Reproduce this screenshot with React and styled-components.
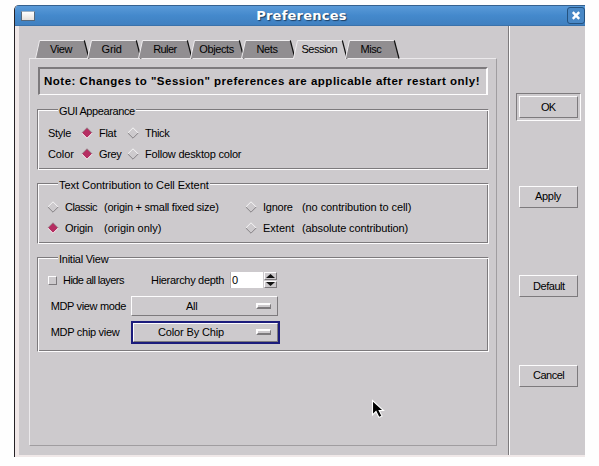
import React from "react";
import styled, { createGlobalStyle, css } from "styled-components";

const C = { bg: "#cdcacd", dark: "#7d7a7d", light: "#fdfcfd" };

const GlobalStyle = createGlobalStyle`
  body { margin: 0; background: #fefefe; overflow: hidden; }
  * { box-sizing: border-box; }
`;

const Stage = styled.div`
  position: relative;
  width: 599px;
  height: 466px;
  padding: 5px 0 0 14px;
  background: #fefefe;
  font: 11px/14px "Liberation Sans", Arial, sans-serif;
  color: #000;
`;

const Window = styled.div`
  display: flex;
  flex-direction: column;
  width: 571px;
  height: 452px;
  border-left: 1px solid #262226;
  border-top-left-radius: 5px;
  background: #f0e8e8;
  overflow: hidden;
`;

const TitleBar = styled.header`
  display: flex;
  align-items: center;
  justify-content: space-between;
  flex: none;
  height: 21px;
  padding: 0 0 0 6px;
  border-top: 1px solid #35618f;
  border-bottom: 1px solid #3a72ab;
  background: linear-gradient(#5a9ad8, #4489cc 50%, #4080c0);
`;

const MenuBox = styled.div`
  width: 14px;
  height: 10px;
  border: 1px solid #56697c;
  border-top-color: #9fb2c4;
  background: linear-gradient(#fff, #e4e0dc);
`;

const Title = styled.h1`
  margin: 0 0 0 1px;
  font: bold 13px/19px "DejaVu Sans", sans-serif;
  letter-spacing: 0.25px;
  color: #fff;
  text-shadow: 1px 1px 1px #1d3d60;
`;

const CloseButton = styled.button`
  display: flex;
  align-items: center;
  justify-content: center;
  width: 18px;
  height: 17px;
  padding: 0;
  border: 1px solid #24527f;
  border-radius: 3px;
  background: #4988c6;
`;

const Body = styled.div`
  display: flex;
  flex: 1;
  margin: 0 0 2px 4px;
  background: ${C.bg};
`;

const Main = styled.main`
  flex: none;
  width: 491px;
  padding: 14px 0 0 10px;
  border-right: 1px solid ${C.light};
  box-shadow: inset -1px 0 ${C.dark};
`;

const Side = styled.aside`
  display: flex;
  flex-direction: column;
  padding: 67px 0 0 6px;
`;

const Text = styled.span`
  white-space: pre;
  letter-spacing: ${(p) => p.$ls || 0}px;
  ${(p) => p.$w && css`flex: none; width: ${p.$w}px;`}
`;

const TabList = styled.nav`
  position: relative;
  z-index: 1;
  display: flex;
  height: 18px;
  padding-left: 6px;
`;

const TabItem = styled.div`
  position: relative;
  flex: none;
  width: 51.6px;
  height: 18px;
  padding: 2px 0 0 ${(p) => p.$pad}px;
`;

const TabShape = styled.svg`
  position: absolute;
  left: 0;
  top: 0;
  overflow: visible;
`;

const TabText = styled(Text)`
  position: relative;
`;

const Panel = styled.section`
  width: 468px;
  height: 388px;
  padding: 8px 0 0 7px;
  border: 1px solid #a09da0;
  border-top-color: #ebe9eb;
  border-left-color: #ebe9eb;
`;

const Note = styled.div`
  display: flex;
  width: 450px;
  height: 28px;
  margin-left: 1px;
  padding: 5px 0 0 4px;
  border: 2px solid ${C.light};
  border-bottom-width: 1px;
  border-top-color: ${C.dark};
  border-left-color: ${C.dark};
  font-weight: bold;
  font-size: 11.5px;
`;

const GroupBox = styled.section`
  position: relative;
  width: 452px;
  height: ${(p) => p.$h}px;
  margin-top: ${(p) => p.$mt}px;
  padding: ${(p) => p.$pt}px 0 0 ${(p) => p.$pl || 10}px;
  border: 1px solid;
  border-color: ${C.dark} ${C.light} ${C.light} ${C.dark};
  box-shadow: inset 1px 1px ${C.light}, inset -1px -1px ${C.dark};
`;

const Legend = styled(Text)`
  position: absolute;
  left: 20px;
  top: -6px;
  padding: 0 1px;
  background: ${C.bg};
`;

const Row = styled.div`
  display: flex;
  align-items: center;
  height: ${(p) => p.$h || 20.5}px;
`;

const Field = styled.div`
  display: flex;
  align-items: center;
  flex: none;
  width: ${(p) => p.$w}px;
`;

const DiamondIcon = styled.svg`
  flex: none;
  margin-right: 6px;
`;

const CheckBox = styled.span`
  width: 9px;
  height: 9px;
  margin-right: 6px;
  border: 1px solid;
  border-color: ${C.light} ${C.dark} ${C.dark} ${C.light};
`;

const DepthInput = styled.div`
  width: 33px;
  height: 16px;
  padding: 1px 0 0 1px;
  border-left: 1px solid #b5b2b5;
  background: #fff;
`;

const Spinner = styled.div`
  display: flex;
  flex-direction: column;
  gap: 1px;
  margin-left: 1px;
`;

const raised = css`
  border: 1px solid;
  border-color: ${C.light} ${C.dark} ${C.dark} ${C.light};
`;

const SpinButton = styled.div`
  display: flex;
  align-items: center;
  justify-content: center;
  width: 13px;
  height: 7.5px;
  ${raised}
`;

const OptionMenu = styled.div`
  display: flex;
  align-items: center;
  justify-content: space-between;
  width: 147px;
  height: 20px;
  padding: 0 6px 0 ${(p) => p.$pad}px;
  ${raised}
  ${(p) => p.$focus && css`outline: 2px solid #1c1c7c; outline-offset: 0; width: 145px; height: 19px; margin-left: 2px;`}
`;

const Indicator = styled.span`
  width: 15px;
  height: 6px;
  ${raised}
  border-width: 2px 1px 2px 2px;
`;

const ButtonSlot = styled.div`
  display: flex;
  width: 65px;
  height: 28px;
  margin-bottom: 61.5px;
  padding: 2px;
  border: 1px solid transparent;
  ${(p) => p.$default && css`border-color: ${C.dark} ${C.light} ${C.light} ${C.dark};`}
`;

const PushButton = styled.button`
  display: flex;
  align-items: center;
  width: 59px;
  height: 22px;
  padding: 0 0 1px ${(p) => p.$pad}px;
  ${raised}
  background: ${C.bg};
  font: inherit;
  color: inherit;
`;

const Pointer = styled.svg`
  position: absolute;
  left: 371px;
  top: 399px;
`;

const TABS = [
  { name: "View", pad: 15, ls: -0.4 },
  { name: "Grid", pad: 15, ls: -0.2 },
  { name: "Ruler", pad: 15, ls: -0.6 },
  { name: "Objects", pad: 9.5, ls: -0.4 },
  { name: "Nets", pad: 15, ls: -0.3 },
  { name: "Session", pad: 8.5, ls: -0.5, active: true },
  { name: "Misc", pad: 16, ls: -0.5 },
];

function Tab({ name, pad, ls, active }) {
  return (
    <TabItem $pad={pad}>
      <TabShape width="56" height="19">
        <path d="M0.5 18 L4.5 0.5 H49.5 L54 18 Z" fill={active ? C.bg : "#918e91"} />
        {active && <path d="M1 18.5 H52.5" stroke={C.bg} />}
        <path d="M0.5 18.5 L4.5 0.5 H49" fill="none" stroke="#efedef" />
        <path d="M49.3 0.5 L54 18.5" stroke="#111" strokeWidth="1.2" />
      </TabShape>
      <TabText $ls={ls}>{name}</TabText>
    </TabItem>
  );
}

function Diamond({ on }) {
  return (
    <DiamondIcon width="12" height="12" viewBox="0 0 12 12">
      <path d="M6 1 L11 6 L6 11 L1 6 Z" fill={on ? "#b52e62" : "none"} />
      <path d="M0.8 6 L6 0.8 L11.2 6" fill="none" stroke={on ? "#95707e" : "#f6f4f6"} />
      <path d="M0.8 6 L6 11.2 L11.2 6" fill="none" stroke={on ? "#f6e6ec" : "#858285"} />
    </DiamondIcon>
  );
}

function Radio({ on, w, children, ls }) {
  return (
    <Field $w={w}>
      <Diamond on={on} />
      <Text $ls={ls}>{children}</Text>
    </Field>
  );
}

function Group({ title, ls, h, mt, pt, pl, children }) {
  return (
    <GroupBox $h={h} $mt={mt} $pt={pt} $pl={pl}>
      <Legend $ls={ls}>{title}</Legend>
      {children}
    </GroupBox>
  );
}

function Action({ label, pad, ls, primary }) {
  return (
    <ButtonSlot $default={primary}>
      <PushButton $pad={pad}><Text $ls={ls}>{label}</Text></PushButton>
    </ButtonSlot>
  );
}

export default function App() {
  return (
    <Stage>
      <GlobalStyle />
      <Window>
        <TitleBar>
          <MenuBox />
          <Title>Preferences</Title>
          <CloseButton aria-label="Close">
            <svg width="10" height="9" viewBox="0 0 10 9">
              <path d="M1.8 1.2 L8.2 7.8 M8.2 1.2 L1.8 7.8" stroke="#fff" strokeWidth="2.4" />
            </svg>
          </CloseButton>
        </TitleBar>
        <Body>
          <Main>
            <TabList>
              {TABS.map((t) => <Tab key={t.name} {...t} />)}
            </TabList>
            <Panel>
              <Note>
                <Text $ls={0.5}>{'Note: Changes to "Session" preferences are applicable after restart only!'}</Text>
              </Note>
              <Group title="GUI Appearance" ls={-0.4} h={61} mt={14} pt={13}>
                <Row>
                  <Text $w={33} $ls={-0.3}>Style</Text>
                  <Radio on w={46} ls={-0.3}>Flat</Radio>
                  <Radio w={60} ls={-0.4}>Thick</Radio>
                </Row>
                <Row>
                  <Text $w={33} $ls={-0.1}>Color</Text>
                  <Radio on w={46} ls={-0.4}>Grey</Radio>
                  <Radio w={140} ls={-0.2}>Follow desktop color</Radio>
                </Row>
              </Group>
              <Group title="Text Contribution to Cell Extent" ls={-0.04} h={61} mt={13} pt={13} pl={9}>
                <Row>
                  <Radio w={57} ls={-0.5}>Classic</Radio>
                  <Text $w={141} $ls={-0.25}>(origin + small fixed size)</Text>
                  <Radio w={57} ls={-0.25}>Ignore</Radio>
                  <Text $ls={-0.08}>(no contribution to cell)</Text>
                </Row>
                <Row>
                  <Radio on w={57} ls={-0.25}>Origin</Radio>
                  <Text $w={141}>(origin only)</Text>
                  <Radio w={57}>Extent</Radio>
                  <Text $ls={-0.12}>(absolute contribution)</Text>
                </Row>
              </Group>
              <Group title="Initial View" ls={-0.25} h={95} mt={13} pt={11}>
                <Row $h={22}>
                  <CheckBox />
                  <Text $w={88} $ls={-0.55}>Hide all layers</Text>
                  <Text $w={79} $ls={-0.3}>Hierarchy depth</Text>
                  <DepthInput>0</DepthInput>
                  <Spinner>
                    <SpinButton>
                      <svg width="9" height="4"><path d="M4.5 0 L9 4 H0 Z" fill="#111" /></svg>
                    </SpinButton>
                    <SpinButton>
                      <svg width="9" height="4"><path d="M4.5 4 L9 0 H0 Z" fill="#111" /></svg>
                    </SpinButton>
                  </Spinner>
                </Row>
                <Row $h={29}>
                  <Text $w={83} $ls={-0.35}> MDP view mode</Text>
                  <OptionMenu $pad={54}><Text $ls={-0.3}>All</Text><Indicator /></OptionMenu>
                </Row>
                <Row $h={24}>
                  <Text $w={83} $ls={-0.3}> MDP chip view</Text>
                  <OptionMenu $focus $pad={24}><Text $ls={-0.15}>Color By Chip</Text><Indicator /></OptionMenu>
                </Row>
              </Group>
            </Panel>
          </Main>
          <Side>
            <Action label="OK" pad={21} ls={-0.7} primary />
            <Action label="Apply" pad={15} ls={-0.3} />
            <Action label="Default" pad={13} ls={-0.45} />
            <Action label="Cancel" pad={13} ls={-0.5} />
          </Side>
        </Body>
      </Window>
      <Pointer width="16" height="20" viewBox="0 0 16 20">
        <path d="M1.5 1.5 V16 L5 12.5 L8 18.5 L11 17 L8.2 11.5 H12.5 Z" fill="#000" stroke="#fff" strokeWidth="1.1" />
      </Pointer>
    </Stage>
  );
}
